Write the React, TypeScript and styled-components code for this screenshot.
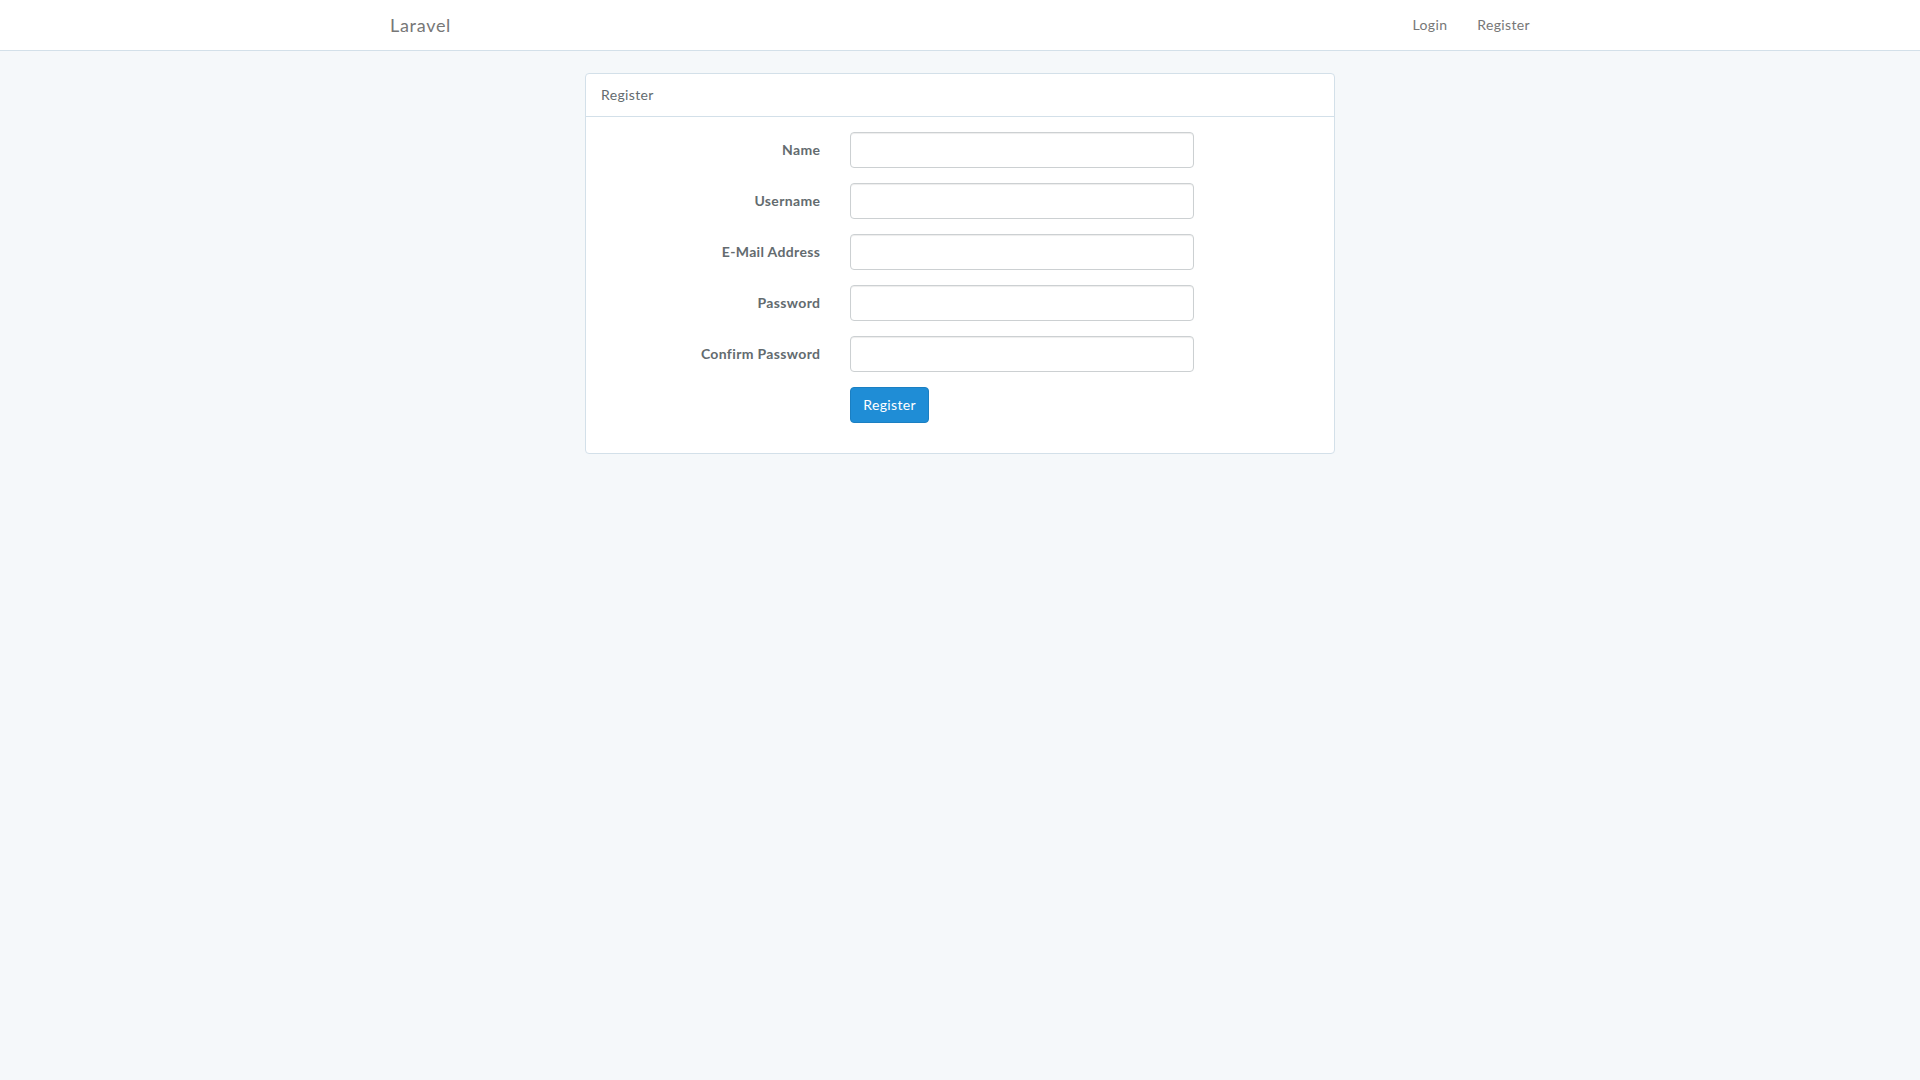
import React from 'react';
import styled, { createGlobalStyle } from 'styled-components';

const GlobalStyle = createGlobalStyle`
  * { box-sizing: border-box; }
  html, body { margin: 0; padding: 0; }
  body {
    background: #f5f8fa;
    font-family: Lato, "Open Sans", sans-serif;
    font-size: 14px;
    line-height: 1.6;
    letter-spacing: 0.35px;
    color: #636b6f;
    min-height: 100vh;
  }
`;

const Navbar = styled.nav`
  background: #fff;
  border-bottom: 1px solid #d3e0e9;
  height: 51px;
  margin-bottom: 22px;
`;

const Container = styled.div`
  width: 1170px;
  margin: 0 auto;
  padding: 0 15px;
`;

const NavInner = styled(Container)`
  display: flex;
  justify-content: space-between;
  align-items: stretch;
  height: 50px;
`;

const Brand = styled.a`
  margin-left: -15px;
  padding: 14px 15px;
  font-size: 18px;
  line-height: 22px;
  letter-spacing: 0.7px;
  color: #777;
  text-decoration: none;
`;

const NavRight = styled.ul`
  display: flex;
  list-style: none;
  margin: 0 -15px 0 0;
  padding: 0;
`;

const NavLink = styled.a`
  display: block;
  padding: 14px 15px;
  line-height: 22px;
  color: #777;
  text-decoration: none;
`;

const Row = styled.div`
  display: flex;
  margin: 0 -15px;
`;

const Col = styled.div<{ span: number; offset?: number }>`
  width: ${(p) => (p.span / 12) * 100}%;
  margin-left: ${(p) => ((p.offset || 0) / 12) * 100}%;
  padding: 0 15px;
`;

const Panel = styled.div`
  background: #fff;
  border: 1px solid #d3e0e9;
  border-radius: 4px;
  margin-bottom: 22px;
`;

const PanelHeading = styled.div`
  padding: 10px 15px;
  line-height: 22px;
  border-bottom: 1px solid #d3e0e9;
  color: #636b6f;
`;

const PanelBody = styled.div`
  padding: 15px;
`;

const FormGroup = styled(Row)`
  margin-bottom: 15px;
`;

const Label = styled.label`
  display: block;
  text-align: right;
  padding-top: 7px;
  line-height: 22px;
  font-weight: 700;
  color: #636b6f;
`;

const Input = styled.input`
  display: block;
  width: 100%;
  height: 36px;
  padding: 6px 12px;
  font: inherit;
  border: 1px solid #ccd0d2;
  border-radius: 4px;
  background: #fff;
  box-shadow: inset 0 1px 1px rgba(0, 0, 0, 0.075);
  outline: none;
`;

const Button = styled.button`
  height: 36px;
  padding: 6px 12px;
  font: inherit;
  letter-spacing: 0.35px;
  line-height: 22px;
  color: #fff;
  background: #1f8dd6;
  border: 1px solid #1b7fc2;
  border-radius: 4px;
  cursor: pointer;
`;

const fields = [
  { id: 'name', label: 'Name', type: 'text' },
  { id: 'username', label: 'Username', type: 'text' },
  { id: 'email', label: 'E-Mail Address', type: 'email' },
  { id: 'password', label: 'Password', type: 'password' },
  { id: 'password-confirm', label: 'Confirm Password', type: 'password' },
];

export default function App() {
  return (
    <>
      <GlobalStyle />
      <Navbar>
        <NavInner>
          <Brand href="#">Laravel</Brand>
          <NavRight>
            <li><NavLink href="#">Login</NavLink></li>
            <li><NavLink href="#">Register</NavLink></li>
          </NavRight>
        </NavInner>
      </Navbar>
      <Container>
        <Row>
          <Col span={8} offset={2}>
            <Panel>
              <PanelHeading>Register</PanelHeading>
              <PanelBody>
                <form onSubmit={(e) => e.preventDefault()}>
                  {fields.map((f) => (
                    <FormGroup key={f.id}>
                      <Col span={4}>
                        <Label htmlFor={f.id}>{f.label}</Label>
                      </Col>
                      <Col span={6}>
                        <Input id={f.id} type={f.type} name={f.id} />
                      </Col>
                    </FormGroup>
                  ))}
                  <FormGroup>
                    <Col span={6} offset={4}>
                      <Button type="submit">Register</Button>
                    </Col>
                  </FormGroup>
                </form>
              </PanelBody>
            </Panel>
          </Col>
        </Row>
      </Container>
    </>
  );
}
